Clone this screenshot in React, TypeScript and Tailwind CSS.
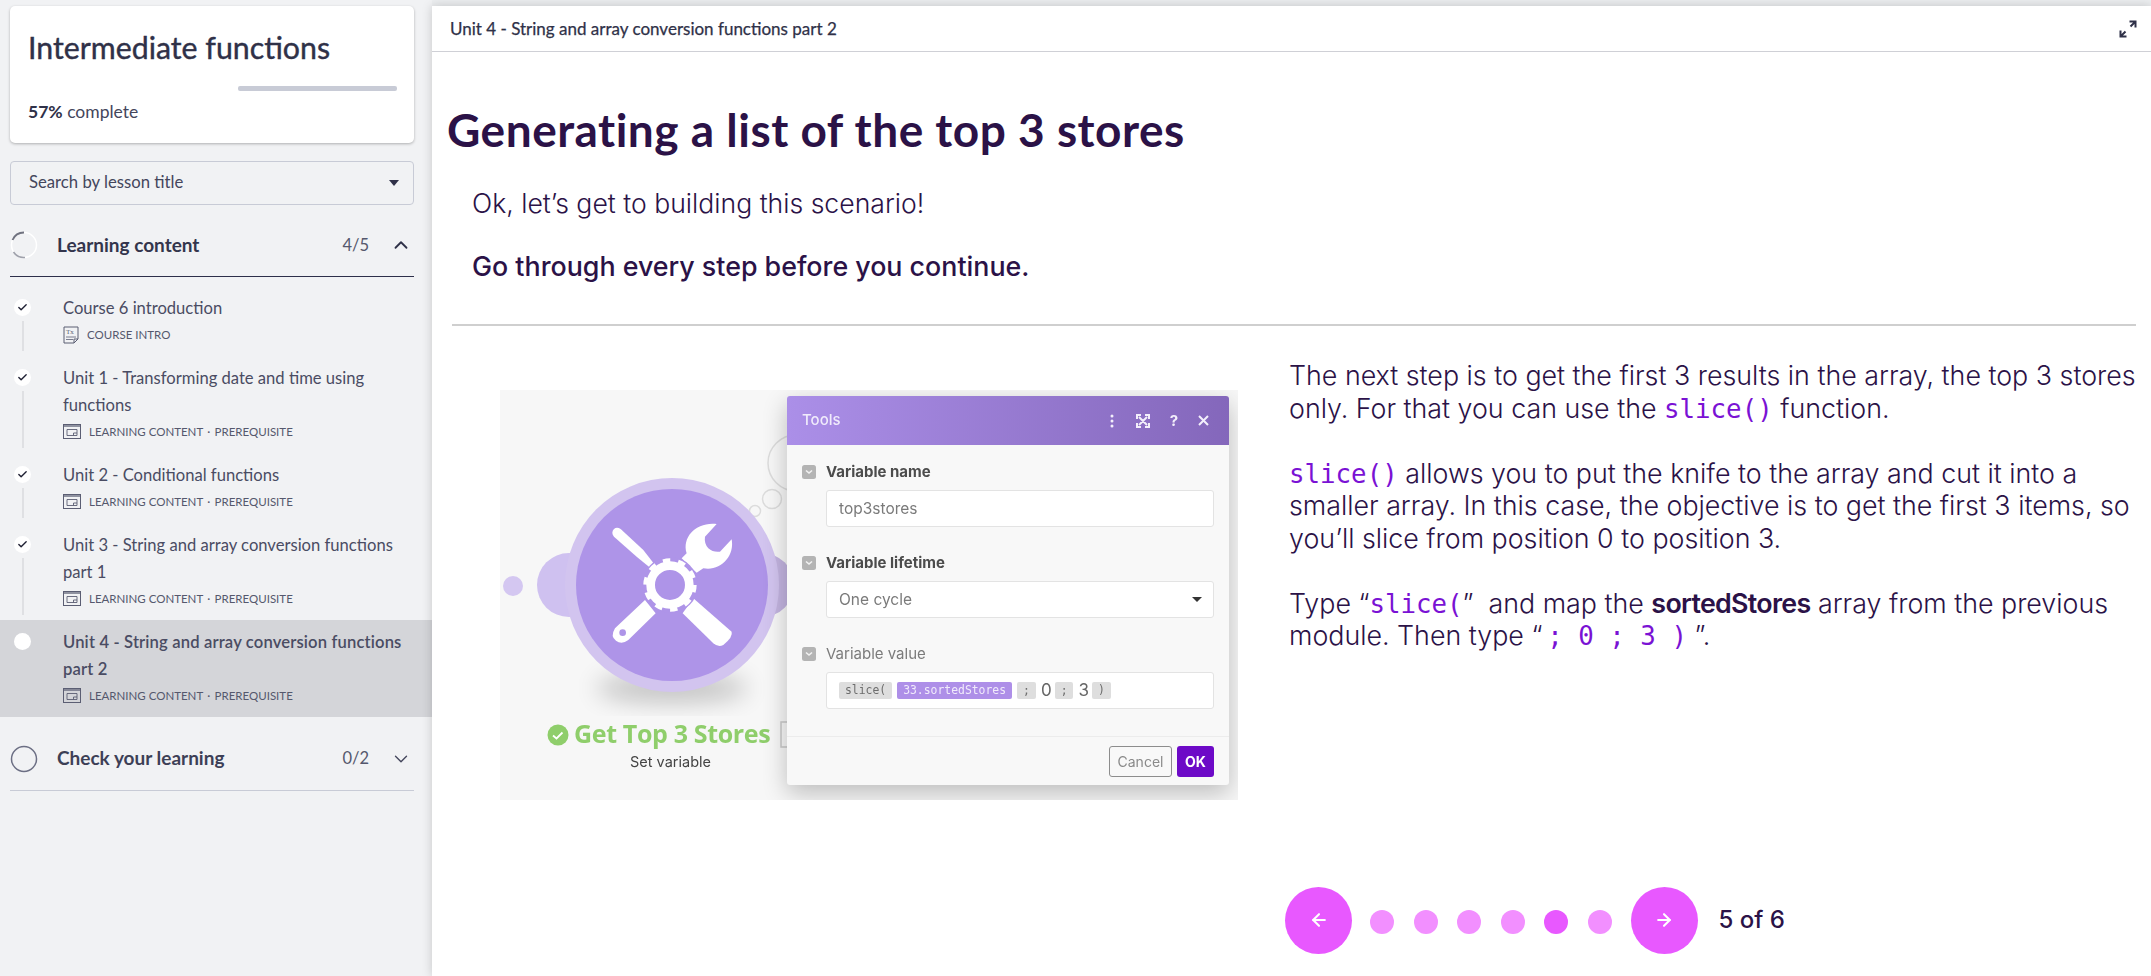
import React from "react";
import { ArrowLeft, ArrowRight, Check, ChevronDown, ChevronUp } from "lucide-react";

const sidebarFont = "font-['Lato','Liberation_Sans',sans-serif]";

function TxIcon() {
  return (
    <svg width="16" height="18" viewBox="0 0 16 18" fill="none" className="shrink-0 text-[#5b5e73]">
      <path d="M1 1h14v12l-4 4H1z" stroke="currentColor" strokeWidth="1" />
      <path d="M15 13h-4v4" stroke="currentColor" strokeWidth="1" />
      <text x="3" y="8" fontSize="7" fill="currentColor" fontFamily="Liberation Serif, serif">Tx</text>
      <path d="M3 11h10M3 13.500h7" stroke="currentColor" strokeWidth=".8" />
    </svg>
  );
}

function PageIcon() {
  return (
    <svg width="18" height="15" viewBox="0 0 18 15" fill="none" className="shrink-0 text-[#5b5e73]">
      <rect x=".5" y=".5" width="17" height="14" stroke="currentColor" />
      <rect x="1" y="1" width="16" height="2" fill="currentColor" opacity=".65" />
      <path d="M4 5.500h10v6H4z" stroke="currentColor" strokeWidth=".9" />
      <path d="M10.500 11.500v-2.500h3.500" stroke="currentColor" strokeWidth=".9" />
    </svg>
  );
}

type Item = { lines: React.ReactNode; meta: string; icon: "tx" | "page"; done: boolean; active?: boolean; last?: boolean };

const prereq = "LEARNING CONTENT \u2009·\u2009 PREREQUISITE";

const items: Item[] = [
  { lines: "Course 6 introduction", meta: "COURSE INTRO", icon: "tx", done: true },
  { lines: <>Unit 1 - Transforming date and time using<br />functions</>, meta: prereq, icon: "page", done: true },
  { lines: "Unit 2 - Conditional functions", meta: prereq, icon: "page", done: true },
  { lines: <>Unit 3 - String and array conversion functions<br />part 1</>, meta: prereq, icon: "page", done: true },
  { lines: <>Unit 4 - String and array conversion functions<br />part 2</>, meta: prereq, icon: "page", done: false, active: true, last: true },
];

function LessonRow({ item }: { item: Item }) {
  return (
    <div className={`flex pt-[9px] pb-[9px] ${item.active ? "bg-[#d4d5d9]" : ""}`}>
      <div className="w-[63px] shrink-0 flex flex-col items-center pr-[18px] pt-[4px]">
        <div className="w-[17px] h-[17px] rounded-full bg-white flex items-center justify-center shrink-0">
          {item.done && <Check size={11} strokeWidth={3} className="text-[#1f2033]" />}
        </div>
        <div className={`w-[2px] flex-1 mt-[5px] -mb-[4px] relative z-10 ${item.last ? "bg-transparent" : "bg-[#dfe0e3]"}`} />
      </div>
      <div className="flex-1 pr-3">
        <div className={`text-[16.600px] leading-[27px] whitespace-nowrap text-[#4a4c63] ${item.active ? "font-semibold tracking-[0.15px]" : ""}`}>{item.lines}</div>
        <div className="flex items-center gap-[8px] h-[25px] text-[11.500px] text-[#55586d] whitespace-pre">
          {item.icon === "tx" ? <TxIcon /> : <PageIcon />}
          <span>{item.meta}</span>
        </div>
      </div>
    </div>
  );
}

function Sidebar() {
  return (
    <aside className={`w-[432px] shrink-0 bg-[#f1f2f4] pt-[6px] ${sidebarFont}`}>
      <div className="ml-[10px] mr-[18px] h-[137px] bg-white rounded-[5px] shadow-[0_1px_3px_rgba(0,0,0,0.28)] pl-[18px] pr-[17px] pt-[19px]">
        <div className="text-[30.300px] leading-[44px] text-[#2f3148] whitespace-nowrap [-webkit-text-stroke:0.4px_#2f3148]">Intermediate functions</div>
        <div className="flex justify-end mt-[17px]">
          <div className="w-[159px] h-[5px] rounded-[2px] bg-[#c8cbd6]" />
        </div>
        <div className="mt-[9px] text-[17.500px] leading-[24px] text-[#44465c]">
          <span className="font-bold text-[#2f3148]">57%</span> complete
        </div>
      </div>
      <div className="ml-[10px] mr-[18px] mt-[18px] h-[44px] border border-[#c8cbd6] rounded-[4px] flex items-center justify-between pl-[18px] pr-[14px] text-[16.700px] text-[#44465c] pb-[1px]">
        <span>Search by lesson title</span>
        <span className="w-0 h-0 border-x-[5px] border-x-transparent border-t-[6px] border-t-[#2f3148]" />
      </div>

      <div className="ml-[10px] mr-[18px] mt-[16px] h-[56px] pb-[7px] border-b border-[#2d2f4a] flex items-center">
        <svg width="28" height="28" viewBox="0 0 28 28" fill="none" className="shrink-0">
          <circle cx="14" cy="14" r="12.500" stroke="#ffffff" strokeWidth="1.500" />
          <path d="M14 1.500A12.500 12.500 0 0 0 2.500 9" stroke="#70727f" strokeWidth="1.800" />
          <path d="M3.500 21A12.500 12.500 0 0 0 15 26.500" stroke="#9fa1ab" strokeWidth="1.500" />
        </svg>
        <span className="ml-[19px] text-[19px] font-bold text-[#33354c]">Learning content</span>
        <span className="ml-auto text-[16.500px] text-[#55586d]">4/5</span>
        <ChevronUp size={22} strokeWidth={2} className="ml-[21px] mr-[2px] text-[#2f3148]" />
      </div>

      <div className="mt-[9px]">
        {items.map((it, i) => (
          <LessonRow key={i} item={it} />
        ))}
      </div>

      <div className="ml-[10px] mr-[18px] mt-[10px] h-[64px] border-b border-[#c8cbd6] flex items-center">
        <svg width="28" height="28" viewBox="0 0 28 28" fill="none" className="shrink-0">
          <circle cx="14" cy="14" r="12.500" stroke="#6c6f84" strokeWidth="1.500" />
        </svg>
        <span className="ml-[19px] text-[19px] font-bold text-[#3d3f56]">Check your learning</span>
        <span className="ml-auto text-[16.500px] text-[#55586d]">0/2</span>
        <ChevronDown size={22} strokeWidth={1.500} className="ml-[21px] mr-[2px] text-[#44465c]" />
      </div>
    </aside>
  );
}

function ModuleArt() {
  return (
    <svg width="738" height="410" viewBox="0 0 738 410" className="absolute inset-0" fill="none">
      <defs>
        <filter id="soft" x="-50%" y="-50%" width="200%" height="200%">
          <feGaussianBlur stdDeviation="12" />
        </filter>
      </defs>
      <ellipse cx="172" cy="298" rx="76" ry="14" fill="#000" opacity=".22" filter="url(#soft)" />
      <circle cx="13" cy="196" r="10" fill="#d4c7f1" />
      <circle cx="69" cy="195" r="32" fill="#cfc1f0" />
      <circle cx="262" cy="195" r="32" fill="#c3b4e0" />
      <circle cx="296" cy="73" r="28" stroke="#dcdcdc" strokeWidth="1.500" fill="#f7f7f7" />
      <circle cx="272" cy="109" r="9.500" stroke="#dcdcdc" strokeWidth="1.500" fill="#f7f7f7" />
      <circle cx="255" cy="121" r="5.500" stroke="#dcdcdc" strokeWidth="1.500" fill="#f7f7f7" />
      <circle cx="172" cy="195" r="107" fill="#d2c4ef" />
      <circle cx="172" cy="195" r="96" fill="#ae94e8" />
      <g transform="translate(-10 -10) scale(.3333)">
        <path d="M372 447Q380 440 392 447L460 510 495 555 485 567 440 530 372 470Q362 458 372 447Z" fill="#fff" />
        <path d="M680 432C620 425 575 470 590 520L575 535 620 578 640 565C690 575 735 530 725 478L690 515Q670 518 655 505 642 490 645 470Z" fill="#fff" />
        <path d="M465 660 375 745Q360 770 378 782 395 795 415 780L497 700Z" fill="#fff" />
        <circle cx="398" cy="758" r="10" fill="#ae94e8" />
        <path d="M610 655 725 755Q730 770 700 795 685 803 670 790L578 700Z" fill="#fff" />
        <circle cx="540" cy="615" r="84" fill="#ae94e8" />
        <circle cx="540" cy="615" r="58" stroke="#fff" strokeWidth="26" />
        <circle cx="540" cy="615" r="73" stroke="#fff" strokeWidth="14" strokeDasharray="22 23.800" />
      </g>
      <rect x="281" y="332" width="10" height="25" stroke="#c9c9c9" strokeWidth="1.500" />
      <circle cx="58" cy="345" r="10.500" fill="#8fce6b" />
      <path d="M53 345.500l3.500 3 6-6" stroke="#fff" strokeWidth="1.800" />
    </svg>
  );
}

function Caret() {
  return (
    <svg width="14" height="14" viewBox="0 0 14 14" className="shrink-0">
      <rect width="14" height="14" rx="2.500" fill="#b4b4b4" />
      <path d="M4 5.500l3 2.500 3-2.500" stroke="#f2f2f2" strokeWidth="1.600" fill="none" />
    </svg>
  );
}

function Field({ label, bold, children }: { label: string; bold?: boolean; children: React.ReactNode }) {
  return (
    <div className="mb-[27px]">
      <div className="flex items-center gap-[10px] h-[18px] mb-[9px]">
        <Caret />
        <span className={`text-[15px] ${bold ? "font-bold text-[#4c4c4c]" : "text-[#7b7b7b]"}`}>{label}</span>
      </div>
      <div className="ml-[24px] h-[37px] rounded-[3px] border border-[#e3e3e3] bg-white flex items-center pl-[12px] pr-[11px] text-[15.500px] text-[#7a7a7a]">
        {children}
      </div>
    </div>
  );
}

function Chip({ children, purple }: { children: React.ReactNode; purple?: boolean }) {
  return (
    <span className={`h-[17px] px-[6px] mr-[5px] rounded-[2px] flex items-center text-[11.400px] font-['DejaVu_Sans_Mono',monospace] ${purple ? "bg-[#ae8fe8] text-[#f1ebfb]" : "bg-[#dedede] text-[#6d6d6d]"}`}>
      {children}
    </span>
  );
}

function Figure() {
  return (
    <div className="relative ml-[68px] mt-[30px] w-[738px] h-[410px] shrink-0 bg-[#f7f7f7] blur-[0.6px] font-['Inter',sans-serif] overflow-hidden">
      <ModuleArt />
      <div className="absolute left-[74px] top-[327px] text-[25px] leading-[32px] font-bold text-[#8fce6b] whitespace-nowrap font-['Open_Sans',sans-serif] tracking-[-0.35px]">Get Top 3 Stores</div>
      <div className="absolute left-[130px] top-[363px] text-[14.500px] leading-[18px] text-[#444]">Set variable</div>

      <div className="absolute left-[287px] top-[6px] w-[442px] h-[389px] rounded-[3px] bg-[#f8f8f8] shadow-[0_8px_24px_rgba(0,0,0,0.24)] flex flex-col">
        <div className="h-[49px] shrink-0 rounded-t-[3px] bg-gradient-to-r from-[#ab8fe8] to-[#8467bb] flex items-center pl-[15px] pr-[20px] text-white">
          <span className="text-[15px] font-medium text-[#f0ebfb]">Tools</span>
          <div className="ml-auto flex items-center gap-[18px] text-[#f3effb]">
            <svg width="12" height="14" viewBox="0 0 12 14" fill="currentColor"><circle cx="6" cy="2" r="1.500" /><circle cx="6" cy="7" r="1.500" /><circle cx="6" cy="12" r="1.500" /></svg>
            <svg width="14" height="14" viewBox="0 0 14 14" fill="none" stroke="currentColor" strokeWidth="2"><path d="M1 5V1h4M9 1h4v4M13 9v4H9M5 13H1V9M3 3l8 8M11 3l-8 8" /></svg>
            <span className="text-[15px] font-bold leading-none w-[12px] text-center">?</span>
            <svg width="11" height="11" viewBox="0 0 11 11" stroke="currentColor" strokeWidth="2"><path d="M1 1l9 9M10 1l-9 9" /></svg>
          </div>
        </div>
        <div className="flex-1 pl-[15px] pr-[15px] pt-[18px]">
          <Field label="Variable name" bold>top3stores</Field>
          <Field label="Variable lifetime" bold>
            <span>One cycle</span>
            <span className="ml-auto w-0 h-0 border-x-[5px] border-x-transparent border-t-[5px] border-t-[#333]" />
          </Field>
          <Field label="Variable value">
            <Chip>slice(</Chip>
            <Chip purple>33.sortedStores</Chip>
            <Chip>;</Chip>
            <span className="text-[17px] text-[#666] mr-[3px]">0</span>
            <Chip>;</Chip>
            <span className="text-[17px] text-[#666] mr-[3px]">3</span>
            <Chip>)</Chip>
          </Field>
        </div>
        <div className="h-[51px] shrink-0 border-t border-[#ececec] flex items-center justify-end gap-[5px] pr-[15px] pb-[1px]">
          <span className="w-[63px] h-[31px] rounded-[3px] border border-[#8d8d8d] flex items-center justify-center text-[14px] text-[#8a8a8a]">Cancel</span>
          <span className="w-[37px] h-[31px] rounded-[3px] bg-[#6d0ac7] flex items-center justify-center text-[14px] font-bold text-white">OK</span>
        </div>
      </div>
    </div>
  );
}

const codeCls = "font-['DejaVu_Sans_Mono',monospace] text-[#7a12d4] text-[25.800px] leading-[0] font-normal";

function Pagination() {
  const dots = [0, 1, 2, 3, 4, 5];
  return (
    <div className="flex items-center -ml-[4px] mt-[235px]">
      <span className="w-[67px] h-[67px] rounded-full bg-[#e858ff] flex items-center justify-center text-white">
        <ArrowLeft size={20} strokeWidth={2.500} />
      </span>
      <div className="flex items-center ml-[18px] gap-[19.500px] mt-[4px]">
        {dots.map((d) => (
          <span key={d} className={`w-[24px] h-[24px] rounded-full ${d === 4 ? "bg-[#e858ff]" : "bg-[#f28fff]"}`} />
        ))}
      </div>
      <span className="ml-[19px] w-[67px] h-[67px] rounded-full bg-[#e858ff] flex items-center justify-center text-white">
        <ArrowRight size={20} strokeWidth={2.500} />
      </span>
      <span className="ml-[21px] text-[24px] font-medium text-[#2b1247] whitespace-nowrap">5 of 6</span>
    </div>
  );
}

export default function App() {
  return (
    <div className="flex h-screen w-full overflow-hidden bg-[#eceef0]">
      <Sidebar />
      <main className="flex-1 mt-[6px] bg-white shadow-[0_0_10px_rgba(0,0,0,0.18)] font-['Inter',sans-serif] text-[#2b1247] relative">
        <header className={`h-[46px] border-b border-[#cfd0d6] flex items-center pl-[18px] pr-[14px] ${sidebarFont}`}>
          <span className="text-[17px] text-[#2f3148] [-webkit-text-stroke:0.25px_#2f3148]">Unit 4 - String and array conversion functions part 2</span>
          <svg width="18" height="18" viewBox="0 0 18 18" fill="none" className="ml-auto text-[#2f3148]" stroke="currentColor" strokeWidth="2">
            <path d="M10.500 1.500h6v6M16 2l-4.500 4.500" />
            <path d="M7.500 16.500h-6v-6M2 16l4.500-4.500" />
          </svg>
        </header>
        <h1 className="mt-[50px] ml-[15px] text-[46px] leading-[56px] tracking-[0.5px] font-bold text-[#2b1247] whitespace-nowrap font-['Lato',sans-serif]">Generating a list of the top 3 stores</h1>
        <p className="ml-[40px] mt-[29px] text-[26.600px] leading-[32px] font-light">Ok, let’s get to building this scenario!</p>
        <p className="ml-[40px] mt-[31px] text-[26.800px] leading-[32px] font-medium">Go through every step before you continue.</p>
        <div className="ml-[20px] mr-[15px] mt-[42px] h-[2px] bg-[#cfcfcf]" />
        <div className="flex items-start mt-[34px]">
          <Figure />
          <div className="ml-[51px] mr-[10px] -mt-[1px] flex-1 min-w-0">
            <p className="text-[26.800px] leading-[32.500px] font-light mb-[32.500px]">
              The next step is to get the first 3 results in the array, the top 3 stores only. For that you can use the <code className={codeCls}>slice()</code> function.
            </p>
            <p className="text-[26.800px] leading-[32.500px] font-light mb-[32.500px]">
              <code className={codeCls}>slice()</code> allows you to put the knife to the array and cut it into a smaller array. In this case, the objective is to get the first 3 items, so you’ll slice from position 0 to position 3.
            </p>
            <p className="text-[26.800px] leading-[32.500px] font-light">
              Type “<code className={codeCls}>slice(</code>”&nbsp; and map the <strong className="font-semibold tracking-[-0.7px]">sortedStores</strong> array from the previous module. Then type “{"\u2009"}<code className={codeCls}>; 0 ; 3 )</code> ”.
            </p>
            <Pagination />
          </div>
        </div>
      </main>
    </div>
  );
}
